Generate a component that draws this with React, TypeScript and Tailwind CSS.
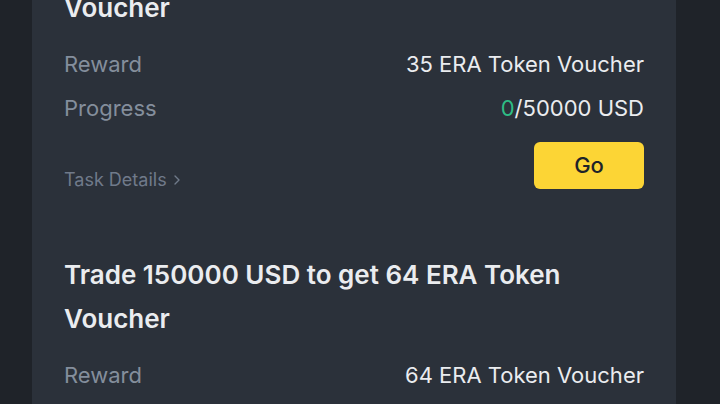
import { ChevronRight } from "lucide-react";

const tasks = [
  {
    id: 1,
    title: "Trade 50000 USD to get 35 ERA Token Voucher",
    reward: "35 ERA Token Voucher",
    done: 0,
    target: 50000,
  },
  {
    id: 2,
    title: "Trade 150000 USD to get 64 ERA Token Voucher",
    reward: "64 ERA Token Voucher",
    done: 0,
    target: 150000,
  },
];

function TaskItem({ task }: { task: (typeof tasks)[number] }) {
  return (
    <div className="py-8">
      <h3 className="text-[26px] leading-[44px] font-semibold text-[#eaecef] pr-4">
        {task.title}
      </h3>
      <div className="mt-3 text-[22px] leading-[44px]">
        <div className="flex justify-between">
          <span className="text-[#848e9c]">Reward</span>
          <span className="text-[#eaecef]">{task.reward}</span>
        </div>
        <div className="flex justify-between">
          <span className="text-[#848e9c]">Progress</span>
          <span className="text-[#eaecef]">
            <span className="text-[#2ebd85]">{task.done}</span>/{task.target} USD
          </span>
        </div>
      </div>
      <div className="mt-3 flex items-end justify-between">
        <button className="flex items-center gap-0.5 leading-none text-[18px] text-[#707a8a]">
          Task Details
          <ChevronRight className="w-4 h-4" strokeWidth={2} />
        </button>
        <button className="w-[110px] h-[47px] rounded-md bg-[#fcd535] text-[#1e2329] text-[22px] font-medium">
          Go
        </button>
      </div>
    </div>
  );
}

export default function App() {
  return (
    <div
      className="h-[404px] overflow-hidden bg-[#1f2329] pl-8 pr-11"
      style={{ fontFamily: "Inter, 'Noto Sans', sans-serif" }}
    >
      <div className="-mt-[90px] bg-[#2b313a] px-8">
        {tasks.map((t) => (
          <TaskItem key={t.id} task={t} />
        ))}
      </div>
    </div>
  );
}
